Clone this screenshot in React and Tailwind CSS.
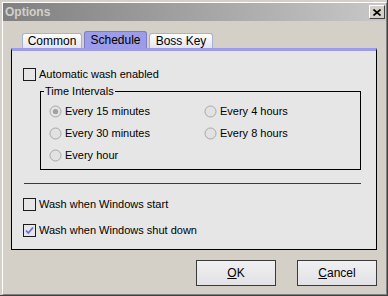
import React from 'react';

const font = { fontFamily: '"Liberation Sans", Arial, sans-serif' };

function CheckBox({ checked, label }) {
  return (
    <div className="flex items-center h-[13px]">
      <div className="w-[13px] h-[13px] border border-[#1c1c1c] flex items-center justify-center">
        {checked && (
          <svg width="9" height="9" viewBox="0 0 9 9">
            <path d="M1 4.5 L3.3 7 L8 1.5" fill="none" stroke="#6464ff" strokeWidth="1.7" />
          </svg>
        )}
      </div>
      <span className="ml-[3px] text-[11px] text-black leading-none">{label}</span>
    </div>
  );
}

function Radio({ checked, label }) {
  return (
    <div className="flex items-center h-[13px]">
      <svg width="13" height="13" viewBox="0 0 13 13">
        <circle cx="6.5" cy="6.5" r="5.5" fill="#e2e2e2" stroke="#a8a8a8" strokeWidth="1" />
        {checked && <circle cx="6.5" cy="6.5" r="2.6" fill="#a0a0a0" />}
      </svg>
      <span className="ml-[3px] text-[11px] text-black leading-none">{label}</span>
    </div>
  );
}

function Tab({ label, active }) {
  if (active) {
    return (
      <div className="h-[17px] w-[63px] flex items-center justify-center rounded-t-[3px] border border-b-0 border-[#7c7cc8] bg-[#9c9ce8] text-[12px] text-black">
        {label}
      </div>
    );
  }
  return (
    <div className="h-[15px] flex items-center justify-center rounded-t-[3px] border border-b-0 border-[#a9b1d0] bg-gradient-to-b from-white to-[#e4e4ec] text-[12px] text-black">
      {label}
    </div>
  );
}

function Button({ children }) {
  return (
    <div className="w-[80px] h-[26px] border border-[#3a3a3a] bg-gradient-to-b from-[#f0f0f2] to-[#e2e2e6] flex items-center justify-center text-[12px] text-black">
      {children}
    </div>
  );
}

export default function App() {
  return (
    <div className="w-[388px] h-[296px] bg-[#d4d0c8] pl-[2px] pt-[2px] border-r border-b border-[#404040] flex flex-col" style={font}>
      <div className="flex-1 flex flex-col border-l border-t border-white border-r border-b border-r-[#808080] border-b-[#808080]">
        {/* title bar */}
        <div className="h-[18px] flex items-center justify-between bg-gradient-to-r from-[#808080] to-[#c8c8c8]">
          <span className="pl-[2px] text-[12px] font-bold text-[#d4d0c8]">Options</span>
          <div className="mr-[1px] w-[16px] h-[14px] bg-[#d4d0c8] border border-t-white border-l-white border-r-[#404040] border-b-[#404040] flex items-center justify-center">
            <svg width="8" height="7" viewBox="0 0 8 7">
              <path d="M0.5 0.5 L7.5 6.5 M7.5 0.5 L0.5 6.5" stroke="#000" strokeWidth="1.6" />
            </svg>
          </div>
        </div>

        <div className="flex-1 flex flex-col px-[8px] pt-[10px]">
          {/* tabs */}
          <div className="flex items-end gap-[2px] pl-[11px]">
            <div className="w-[60px]"><Tab label="Common" /></div>
            <Tab label="Schedule" active />
            <div className="w-[64px]"><Tab label="Boss Key" /></div>
          </div>

          {/* panel */}
          <div className="w-[366px] h-[202px] border-t-[3px] border-t-[#9c9ce8] border-l border-r border-b border-black bg-[#e6e6e6] pl-[11px] pt-[17px] flex flex-col">
            <CheckBox label="Automatic wash enabled" />

            <div className="relative mt-[10px] ml-[17px] w-[321px] h-[79px] border border-black">
              <span className="absolute -top-[7px] left-[3px] px-[1px] bg-[#e6e6e6] text-[11px] leading-[13px] text-black">Time Intervals</span>
              <div className="grid grid-cols-[155px_1fr] gap-y-[9px] pl-[8px] pt-[13px]">
                <Radio checked label="Every 15 minutes" />
                <Radio label="Every 4 hours" />
                <Radio label="Every 30 minutes" />
                <Radio label="Every 8 hours" />
                <Radio label="Every hour" />
              </div>
            </div>

            <div className="mt-[13px] ml-[1px] w-[337px] h-[1px] bg-[#1a3a8a]" />

            <div className="mt-[14px]">
              <CheckBox label="Wash when Windows start" />
            </div>
            <div className="mt-[13px]">
              <CheckBox checked label="Wash when Windows shut down" />
            </div>
          </div>

          {/* buttons */}
          <div className="w-[366px] flex justify-end gap-[21px] mt-[10px]">
            <Button><span className="underline">O</span>K</Button>
            <Button><span className="underline">C</span>ancel</Button>
          </div>
        </div>
      </div>
    </div>
  );
}
